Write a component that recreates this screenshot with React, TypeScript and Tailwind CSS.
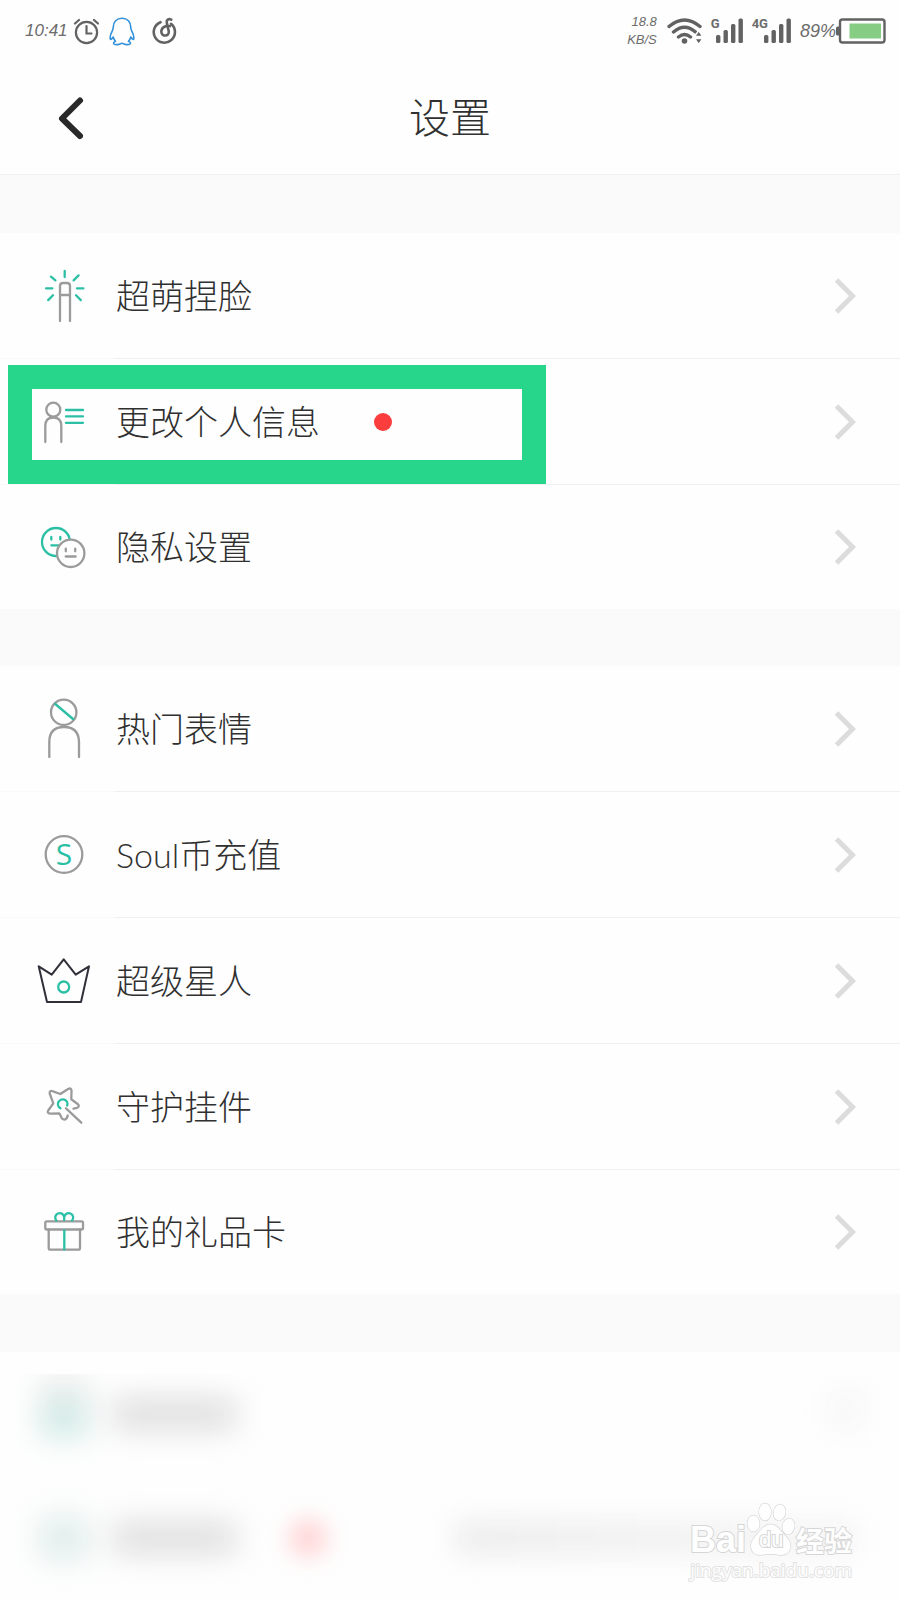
import type { ReactNode } from 'react';

const GREY = '#9b9b9b';
const TEAL = '#2bbfa5';
const INK = '#626262';

function RowIcon({ children }: { children: ReactNode }) {
  return (
    <svg
      viewBox="0 0 64 64"
      className="size-16 shrink-0"
      fill="none"
      stroke={GREY}
      strokeWidth={2.3}
      strokeLinecap="round"
      strokeLinejoin="round"
      aria-hidden="true"
    >
      {children}
    </svg>
  );
}

const WandIcon = (
  <RowIcon>
    <path d="M28 57V22q0-3 3-3h4q3 0 3 3v35M28 31h10" />
    <path
      stroke={TEAL}
      d="M32.7 7v6M19 12.6l4.400 3.800M46.600 11.400l-5 5M14 24.300h6.400M45 24.300h6.400M21 31.300l-4.800 4.800M44 31.300l4.800 4.800"
    />
  </RowIcon>
);

const ProfileIcon = (
  <RowIcon>
    <circle cx="21.300" cy="19.700" r="7" />
    <path d="M13.300 52V36q0-8.500 8-8.500t8 8.500v16" />
    <path stroke={TEAL} d="M34 20h17M34 26.400h17M34 32.800h17" />
  </RowIcon>
);

const FacesIcon = (
  <RowIcon>
    <g stroke={TEAL}>
      <circle cx="24" cy="27" r="14" />
      <path d="M19.300 22v2.600M28.300 22v2.600M19.300 30.300h7" />
    </g>
    <circle cx="38.700" cy="38.300" r="13.700" fill="#fefefe" />
    <path d="M33.800 33.700v2.600M43.200 33.700v2.600M33.700 41.500h10" />
  </RowIcon>
);

const PersonIcon = (
  <RowIcon>
    <circle cx="31.700" cy="15.300" r="12.700" />
    <path stroke={TEAL} d="M23.300 7L41 22" />
    <path d="M17.300 60V45q0-15 14.700-15t15 15v15" />
  </RowIcon>
);

const CoinIcon = (
  <RowIcon>
    <circle cx="32" cy="31.500" r="18.300" />
    <text
      x="32"
      y="42"
      textAnchor="middle"
      fontSize="30"
      fontFamily="'Open Sans', sans-serif"
      fill={TEAL}
      stroke="none"
    >
      S
    </text>
  </RowIcon>
);

const CrownIcon = (
  <RowIcon>
    <path
      stroke="#30303a"
      strokeWidth={2}
      d="M6.700 17.300l13 8.400 12-15.400 12 15.400 13.300-8.400-8 35.700H15z"
    />
    <circle cx="31.700" cy="38" r="5.500" stroke={TEAL} />
  </RowIcon>
);

const StarIcon = (
  <RowIcon>
    <path d="M35.800 40.500L34.800 43Q32.500 46 30 43.500L27.300 38.300L18.500 38.600Q14.500 38.300 16.200 35.500L21.300 28.300L17.700 18.500Q17.300 14.800 21 16.300L28.300 19L36.500 13.800Q39.700 12.600 39.500 16.500L39.300 24.300L46 29.200Q48 31.500 45 32.800L41.500 33.700" />
    <path d="M34 33.300L49.300 47.700" />
    <path stroke={TEAL} d="M28.500 33.200A4.700 4.700 0 1 1 35.200 30.500" />
  </RowIcon>
);

const GiftIcon = (
  <RowIcon>
    <rect x="13.300" y="21.300" width="37.700" height="8.200" rx="1.500" />
    <path d="M16.700 29.500V48q0 1.700 1.700 1.700h28q1.600 0 1.600-1.700V29.500" />
    <path
      stroke={TEAL}
      d="M32.300 30.500v19M24.500 20.800a4.500 4.500 0 1 1 7.700-3.300v2.500M32.200 17.500a4.500 4.500 0 1 1 7.700 3.300"
    />
  </RowIcon>
);

type Item = { label: string; icon: ReactNode; marked?: boolean };

const groups: Item[][] = [
  [
    { label: '超萌捏脸', icon: WandIcon },
    { label: '更改个人信息', icon: ProfileIcon, marked: true },
    { label: '隐私设置', icon: FacesIcon },
  ],
  [
    { label: '热门表情', icon: PersonIcon },
    { label: 'Soul币充值', icon: CoinIcon },
    { label: '超级星人', icon: CrownIcon },
    { label: '守护挂件', icon: StarIcon },
    { label: '我的礼品卡', icon: GiftIcon },
  ],
];

function Chevron() {
  return (
    <svg
      viewBox="0 0 22 38"
      className="ml-auto h-[38px] w-[22px] shrink-0"
      fill="none"
      stroke="#dcdcdc"
      strokeWidth={5}
      aria-hidden="true"
    >
      <path d="M2.500 3l16 16-16 16" />
    </svg>
  );
}

function SettingsRow({ item, last }: { item: Item; last: boolean }) {
  return (
    <li className="relative">
      <button
        type="button"
        className={`flex w-full items-center gap-5 pr-11 pl-8 text-left ${last ? 'h-[124px]' : 'h-[126px]'}`}
      >
        {item.icon}
        <span className="text-[34px] leading-[48px] font-light text-[#303030]">{item.label}</span>
        {item.marked && <span className="ml-[34px] size-[18px] rounded-full bg-[#fb3d3d]" />}
        <Chevron />
      </button>
      {!last && (
        <span className="absolute right-0 bottom-0 left-0 flex h-px">
          <span className="w-[115px] bg-[#f9f9f9]" />
          <span className="flex-1 bg-[#f0f0f0]" />
        </span>
      )}
      {item.marked && (
        <span className="pointer-events-none absolute top-1.5 left-2 z-10 h-[119px] w-[538px] border-[24px] border-[#27d58b]" />
      )}
    </li>
  );
}

function Signal({ label }: { label: string }) {
  return (
    <div className="flex items-start">
      <span className="font-[Roboto,sans-serif] text-[13px] leading-[12px] font-bold">{label}</span>
      <svg viewBox="0 0 28 26" className="-ml-1 h-[26px] w-7" fill={INK} aria-hidden="true">
        <rect x="0" y="17" width="4.400" height="8" rx="1.500" />
        <rect x="7.500" y="12" width="4.400" height="13" rx="1.500" />
        <rect x="15" y="6" width="4.400" height="19" rx="1.500" />
        <rect x="22.500" y="0.500" width="4.400" height="24.500" rx="1.500" />
      </svg>
    </div>
  );
}

function StatusBar() {
  return (
    <div className="flex h-[62px] items-center justify-between pr-[14px] pl-[25px] font-['Liberation_Sans',sans-serif] text-[#6c6c6c]">
      <div className="flex items-center">
        <span className="w-12 text-[17px] leading-6 italic">10:41</span>
        <svg viewBox="0 0 26 28" className="h-7 w-[26px]" fill="none" stroke={INK} strokeWidth={2.200} strokeLinecap="round" aria-hidden="true">
          <circle cx="13.500" cy="15.500" r="10.600" />
          <path d="M13.500 9v7.500h5M2 6.500l4-3.500M25 6.500L21 3" />
        </svg>
        <svg viewBox="0 0 26 30" className="ml-2.5 h-[30px] w-[26px]" fill="none" stroke="#3391da" strokeWidth={1.600} strokeLinejoin="round" aria-hidden="true">
          <path d="M13 2.200C7.500 2.200 4.300 6 4.300 11c0 1.500-.3 2.500-1 3.800C1.800 17.500.8 20.500 1.300 23c.3 1 1.900-.3 2.900-2 .4 1.700 1.200 3 2.300 4.200-1.600.6-2.600 2-1.300 2.900 1.700 1 5.500.6 7.800-.9 2.300 1.500 6.100 1.900 7.800.9 1.300-.9.3-2.300-1.300-2.900 1.100-1.200 1.900-2.500 2.300-4.200 1 1.700 2.600 3 2.900 2 .5-2.500-.5-5.500-2-8.200-.7-1.300-1-2.300-1-3.800 0-5-3.200-8.800-8.700-8.800z" />
        </svg>
        <svg viewBox="0 0 26 28" className="ml-[17px] h-7 w-[26px]" fill="none" stroke={INK} strokeWidth={2.600} strokeLinecap="round" aria-hidden="true">
          <path d="M8.500 5.200A10.600 10.600 0 1 0 19 6.800" />
          <path d="M19.300 2.700c-2.800-1.500-5.100.2-4.500 3l2 8.800c.6 5.200-7.300 5.500-7.500.3C9.300 10.500 13 8.500 18 9" />
        </svg>
      </div>
      <div className="flex items-center">
        <div className="flex w-[30px] flex-col items-end text-[13px] leading-[18px] italic">
          <span>18.8</span>
          <span>KB/S</span>
        </div>
        <svg viewBox="0 0 36 28" className="ml-2.5 h-7 w-9" fill="none" stroke={INK} strokeWidth={3.400} strokeLinecap="round" aria-hidden="true">
          <path d="M2 9.500Q17.500-3.500 33 9.500M6.500 15q11-9.500 22 0M11.500 20q6-5 12 0" />
          <circle cx="17.500" cy="24" r="2.800" fill={INK} stroke="none" />
          <path d="M27.500 19.500l4.200-6 4.200 6zM27.500 21.500h8.400l-4.200 6z" fill={INK} stroke="#fefefe" strokeWidth={1.500} />
        </svg>
        <div className="ml-2 flex gap-2">
          <Signal label="G" />
          <Signal label="4G" />
        </div>
        <span className="ml-2 text-[18px] leading-6 italic">89%</span>
        <svg viewBox="0 0 50 26" className="h-[26px] w-[50px]" fill="none" aria-hidden="true">
          <rect x="0" y="8.500" width="4" height="9" rx="1.500" fill={INK} />
          <rect x="4" y="1.500" width="44.500" height="23" rx="2.500" stroke={INK} strokeWidth={2.400} />
          <rect x="13.500" y="5.500" width="31.500" height="15" fill="#86cd83" />
        </svg>
      </div>
    </div>
  );
}

function Watermark() {
  return (
    <div className="absolute right-12 bottom-4 flex flex-col items-end text-[#fefefe] [-webkit-text-stroke:2px_#d6d6d6] [paint-order:stroke_fill]">
      <div className="flex items-end gap-px">
        <span className="font-['Liberation_Sans',sans-serif] text-[36px] leading-8 font-bold">Bai</span>
        <div className="relative h-[54px] w-12">
          <svg viewBox="0 0 48 54" className="h-[54px] w-12" fill="#fefefe" stroke="#d6d6d6" strokeWidth={1.300} aria-hidden="true">
            <ellipse cx="6.500" cy="21.500" rx="6" ry="8" />
            <ellipse cx="18" cy="10" rx="6" ry="8.500" />
            <ellipse cx="32.500" cy="10.500" rx="6" ry="8" transform="rotate(10 32.500 10.500)" />
            <ellipse cx="41.500" cy="24.500" rx="6" ry="8" transform="rotate(10 41.500 24.500)" />
            <path d="M23.500 22.500c7 0 9.500 6 14 10.500 4 4 6.500 7.500 6 12-.6 5-4.500 8-9.500 8-4 0-6.500-1.200-10.500-1.200S17 53 13 53C8 53 4.500 50 4 45c-.4-4.500 2-8 5.500-12 4.500-4.800 7-10.500 14-10.500z" />
          </svg>
          <span className="absolute bottom-1 left-3 font-['Liberation_Sans',sans-serif] text-[22px] leading-6">du</span>
        </div>
        <span className="font-['Noto_Sans_CJK_SC',sans-serif] text-[28px] leading-8 font-bold">经验</span>
      </div>
      <span className="font-['Open_Sans',sans-serif] text-[19px] leading-7 [-webkit-text-stroke:2px_#e2e2e2]">
        jingyan.baidu.com
      </span>
    </div>
  );
}

function FrostedRows() {
  return (
    <div className="relative h-[248px]" aria-hidden="true">
      <div className="h-[126px] border-b border-[#f9f9f9] pt-[22px]">
        <div className="mx-4 flex h-[102px] overflow-hidden bg-[#fefefe]">
          <div className="mt-1 ml-6 h-[58px] w-12 bg-linear-to-b from-[#ececec] to-[#c4e8e2] blur-[15px]" />
          <div className="mt-6 ml-6 h-8 w-[124px] bg-[#dedede] blur-[15px]" />
          <div className="mt-4 mr-5 ml-auto h-10 w-9 bg-[#f7f7f7] blur-[12px]" />
        </div>
      </div>
      <div className="relative -mt-px flex h-[122px] items-center overflow-hidden bg-[#fefefe] pr-11 pl-10">
        <div className="h-11 w-12 bg-[#dfedeb] blur-[15px]" />
        <div className="ml-6 h-8 w-[124px] bg-[#dedede] blur-[15px]" />
        <div className="ml-[54px] size-9 rounded-full bg-[#ffcfcf] blur-[12px]" />
        <div className="ml-[130px] h-8 flex-1 bg-linear-to-r from-[#ebebeb] via-[#f0f0f0] to-[#f4f4f4] blur-[14px]" />
      </div>
    </div>
  );
}

export default function App() {
  return (
    <div className="relative flex min-h-screen flex-col overflow-hidden bg-[#fefefe] font-[Lato,'Noto_Sans_CJK_SC',sans-serif]">
      <StatusBar />
      <header className="grid h-[113px] grid-cols-[1fr_auto_1fr] items-center border-b border-[#f0f0f0]">
        <button type="button" aria-label="返回" className="ml-12 flex size-12 items-center justify-center">
          <svg viewBox="0 0 48 48" className="size-12" fill="none" stroke="#292929" strokeWidth={6} strokeLinecap="round" strokeLinejoin="round" aria-hidden="true">
            <path d="M32 6.500L14 24.500l18 17.500" />
          </svg>
        </button>
        <h1 className="text-[41px] leading-[56px] font-light text-[#303030]">设置</h1>
      </header>
      <main>
        {groups.map((items, index) => (
          <section key={index}>
            <div className={index === 0 ? 'h-[58px] bg-[#fafafa]' : 'h-[57px] bg-[#fafafa]'} />
            <ul>
              {items.map((item, i) => (
                <SettingsRow key={item.label} item={item} last={i === items.length - 1} />
              ))}
            </ul>
          </section>
        ))}
        <div className="h-[58px] bg-[#fafafa]" />
        <FrostedRows />
      </main>
      <Watermark />
    </div>
  );
}
